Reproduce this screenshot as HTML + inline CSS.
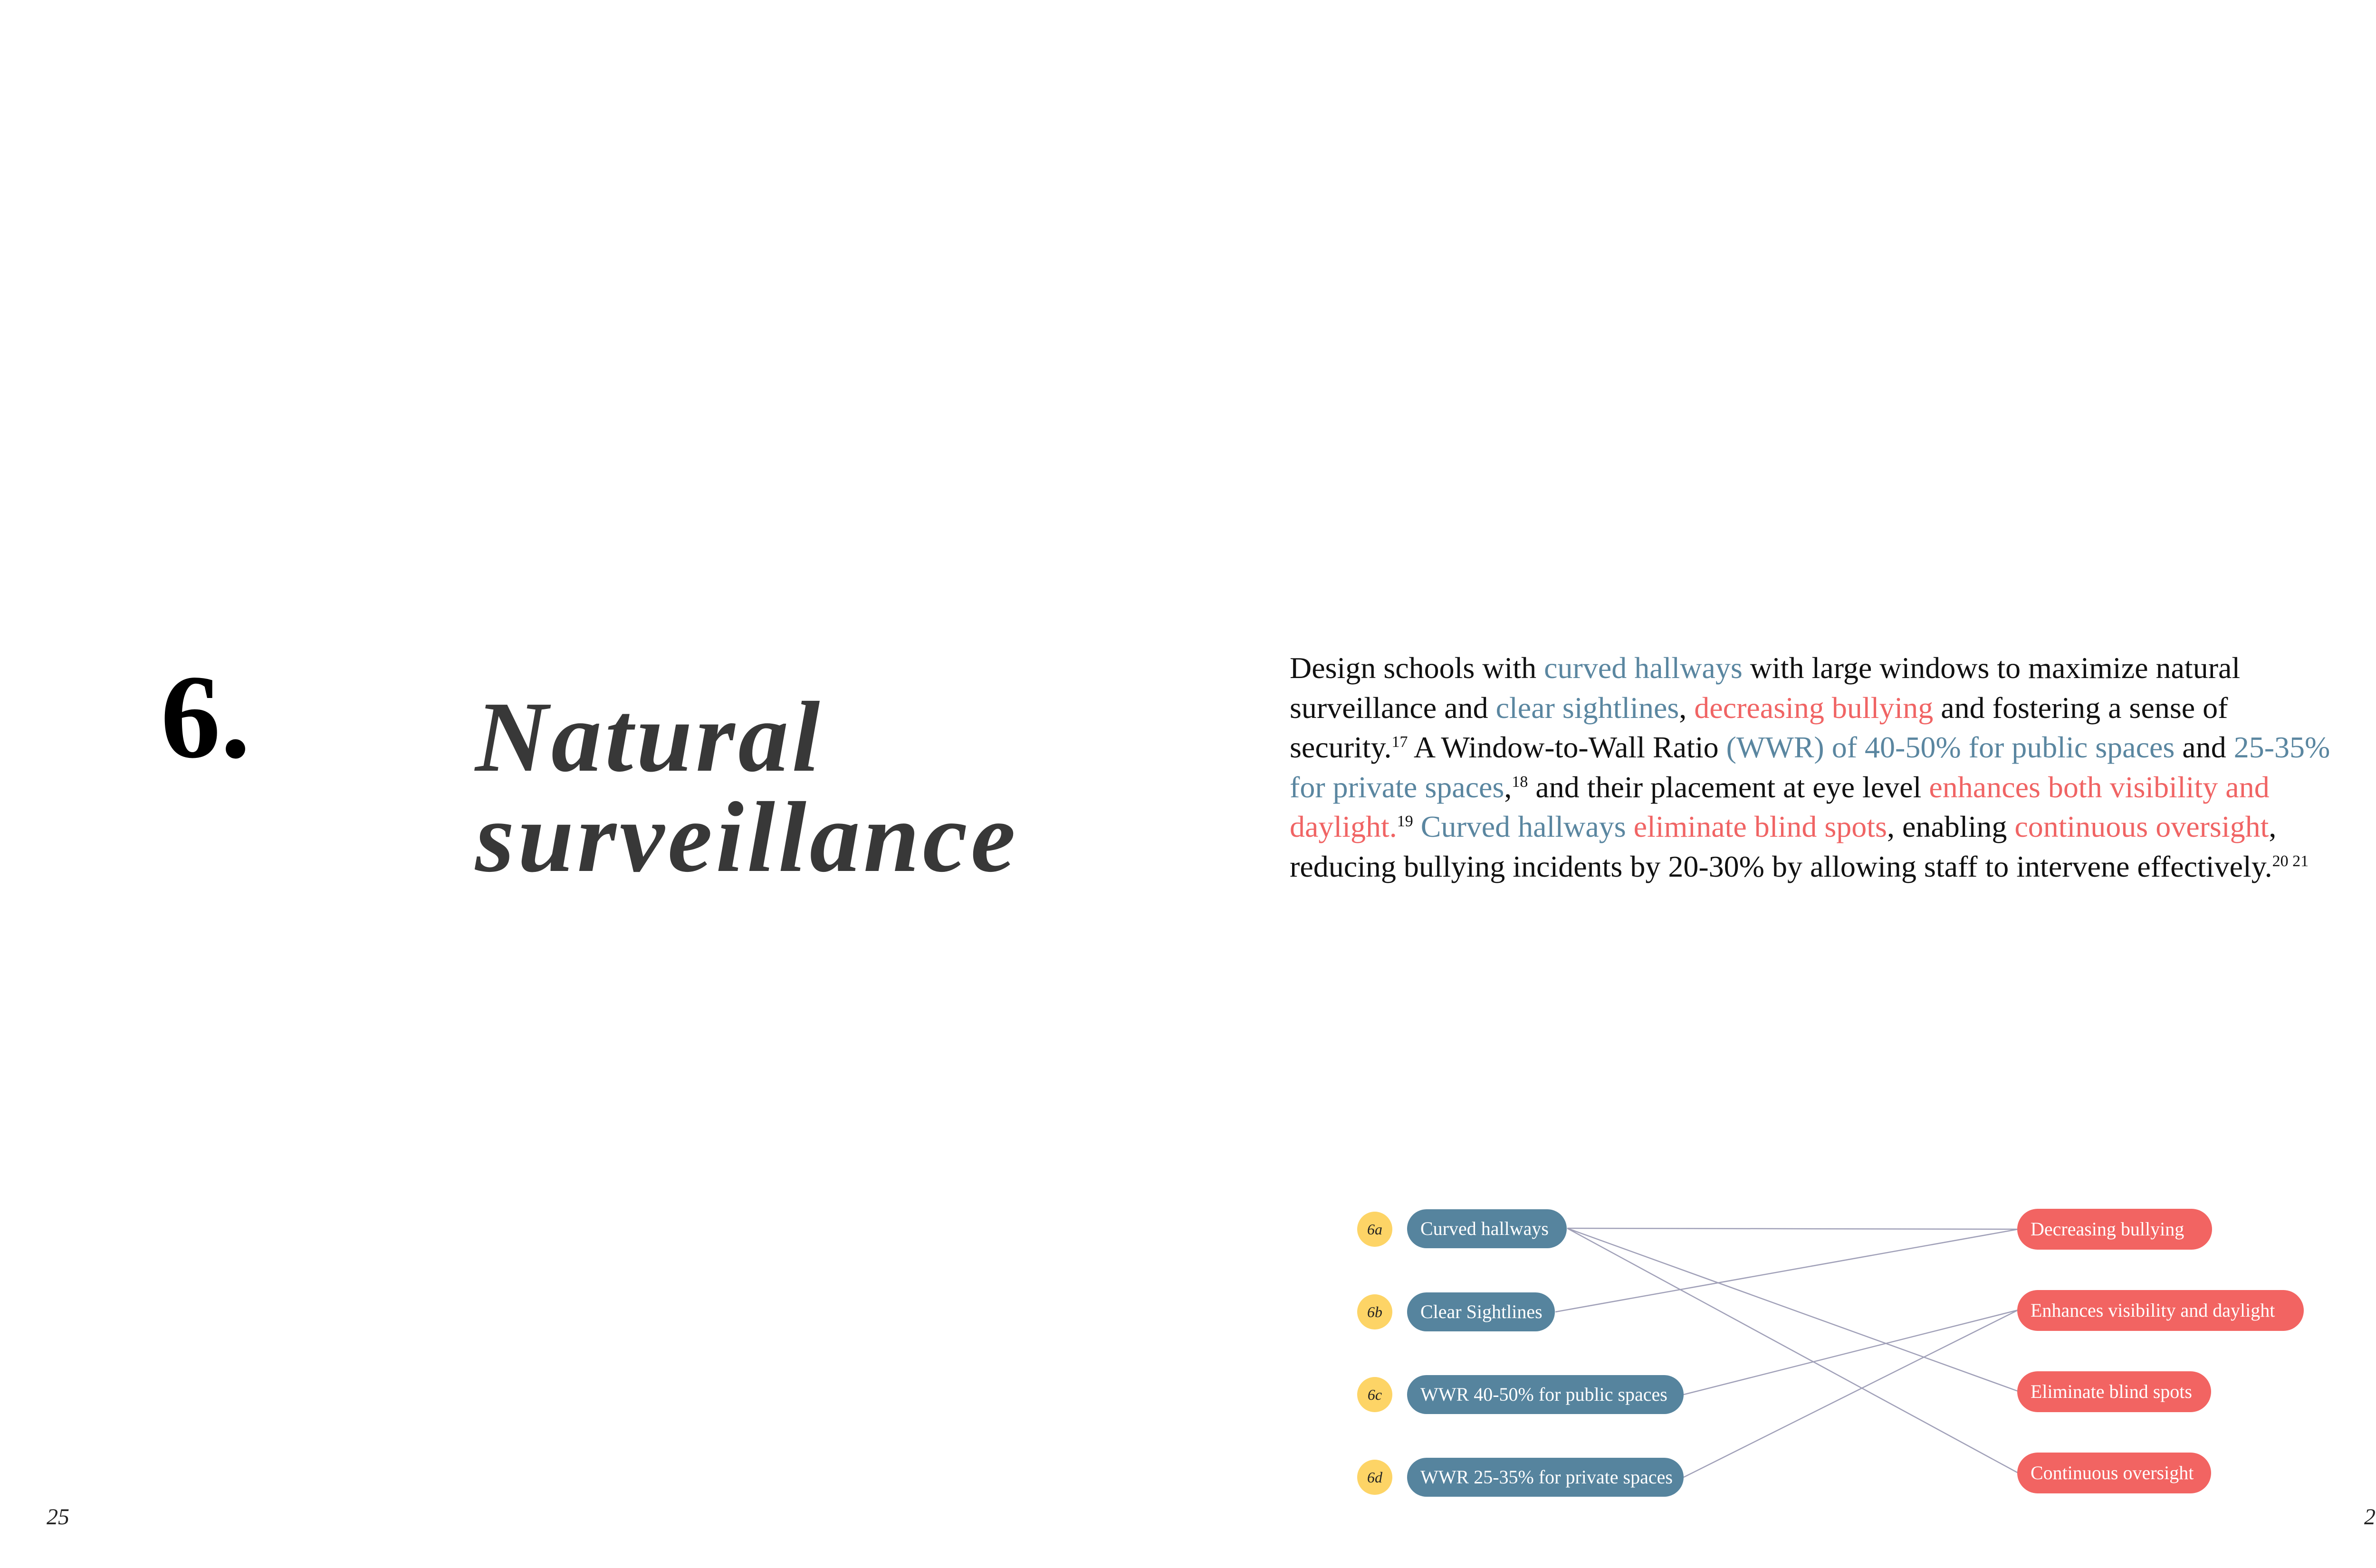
<!DOCTYPE html>
<html><head><meta charset="utf-8"><style>
html,body{margin:0;padding:0;background:#fff;}
body{width:5100px;height:3300px;position:relative;overflow:hidden;font-family:"Liberation Serif",serif;}
.num{position:absolute;left:338px;top:1382px;font-size:252px;font-weight:bold;color:#000;line-height:1;}
.title{position:absolute;left:1000px;top:1445px;font-size:212px;font-weight:bold;font-style:italic;color:#383838;line-height:211px;letter-spacing:7px;}
.para{position:absolute;left:2714px;top:1364px;font-size:64px;line-height:83.6px;color:#111;white-space:nowrap;}
.b{color:#5a86a0}.r{color:#f06464}
sup{font-size:34px;vertical-align:22px;line-height:0}
.pg{position:absolute;top:3165px;font-size:48px;font-style:italic;color:#222;}
.dot{position:absolute;left:2856px;width:74px;height:74px;border-radius:50%;background:#fdd466;font-style:italic;font-size:32px;text-align:center;line-height:74px;color:#222;}
.pill{position:absolute;height:82px;border-radius:41px;color:#fff;font-size:40px;line-height:82px;padding:0 28px;box-sizing:border-box;white-space:nowrap;}
.L{background:#56849e;left:2961px}
.R{background:#f26462;left:4245px;height:86px;line-height:86px;border-radius:43px}
</style></head><body>
<div class="num">6.</div>
<div class="title">Natural<br>surveillance</div>
<div class="para">Design schools with <span class="b">curved hallways</span> with large windows to maximize natural<br>surveillance and <span class="b">clear sightlines</span>, <span class="r">decreasing bullying</span> and fostering a sense of<br>security.<sup>17</sup> A Window-to-Wall Ratio <span class="b">(WWR) of 40-50% for public spaces</span> and <span class="b">25-35%</span><br><span class="b">for private spaces</span>,<sup>18</sup> and their placement at eye level <span class="r">enhances both visibility and</span><br><span class="r">daylight.</span><sup>19</sup> <span class="b">Curved hallways</span> <span class="r">eliminate blind spots</span>, enabling <span class="r">continuous oversight</span>,<br>reducing bullying incidents by 20-30% by allowing staff to intervene effectively.<sup>20 21</sup></div>

<svg style="position:absolute;left:0;top:0" width="5100" height="3300">
<g stroke="#a0a0b8" stroke-width="2.5" fill="none">
<line x1="3298" y1="2585" x2="4247" y2="2587"/>
<line x1="3298" y1="2585" x2="4247" y2="2928"/>
<line x1="3298" y1="2585" x2="4247" y2="3100"/>
<line x1="3273" y1="2761" x2="4247" y2="2587"/>
<line x1="3543" y1="2935" x2="4247" y2="2757"/>
<line x1="3543" y1="3109" x2="4247" y2="2757"/>
</g></svg>

<div class="dot" style="top:2550px">6a</div>
<div class="dot" style="top:2724px">6b</div>
<div class="dot" style="top:2898px">6c</div>
<div class="dot" style="top:3072px">6d</div>

<div class="pill L" style="top:2545px;width:336px">Curved hallways</div>
<div class="pill L" style="top:2720px;width:311px">Clear Sightlines</div>
<div class="pill L" style="top:2894px;width:582px">WWR 40-50% for public spaces</div>
<div class="pill L" style="top:3068px;width:582px">WWR 25-35% for private spaces</div>

<div class="pill R" style="top:2544px;width:410px">Decreasing bullying</div>
<div class="pill R" style="top:2715px;width:603px">Enhances visibility and daylight</div>
<div class="pill R" style="top:2886px;width:408px">Eliminate blind spots</div>
<div class="pill R" style="top:3057px;width:408px">Continuous oversight</div>

<div class="pg" style="left:98px">25</div>
<div class="pg" style="left:4975px">26</div>
</body></html>
